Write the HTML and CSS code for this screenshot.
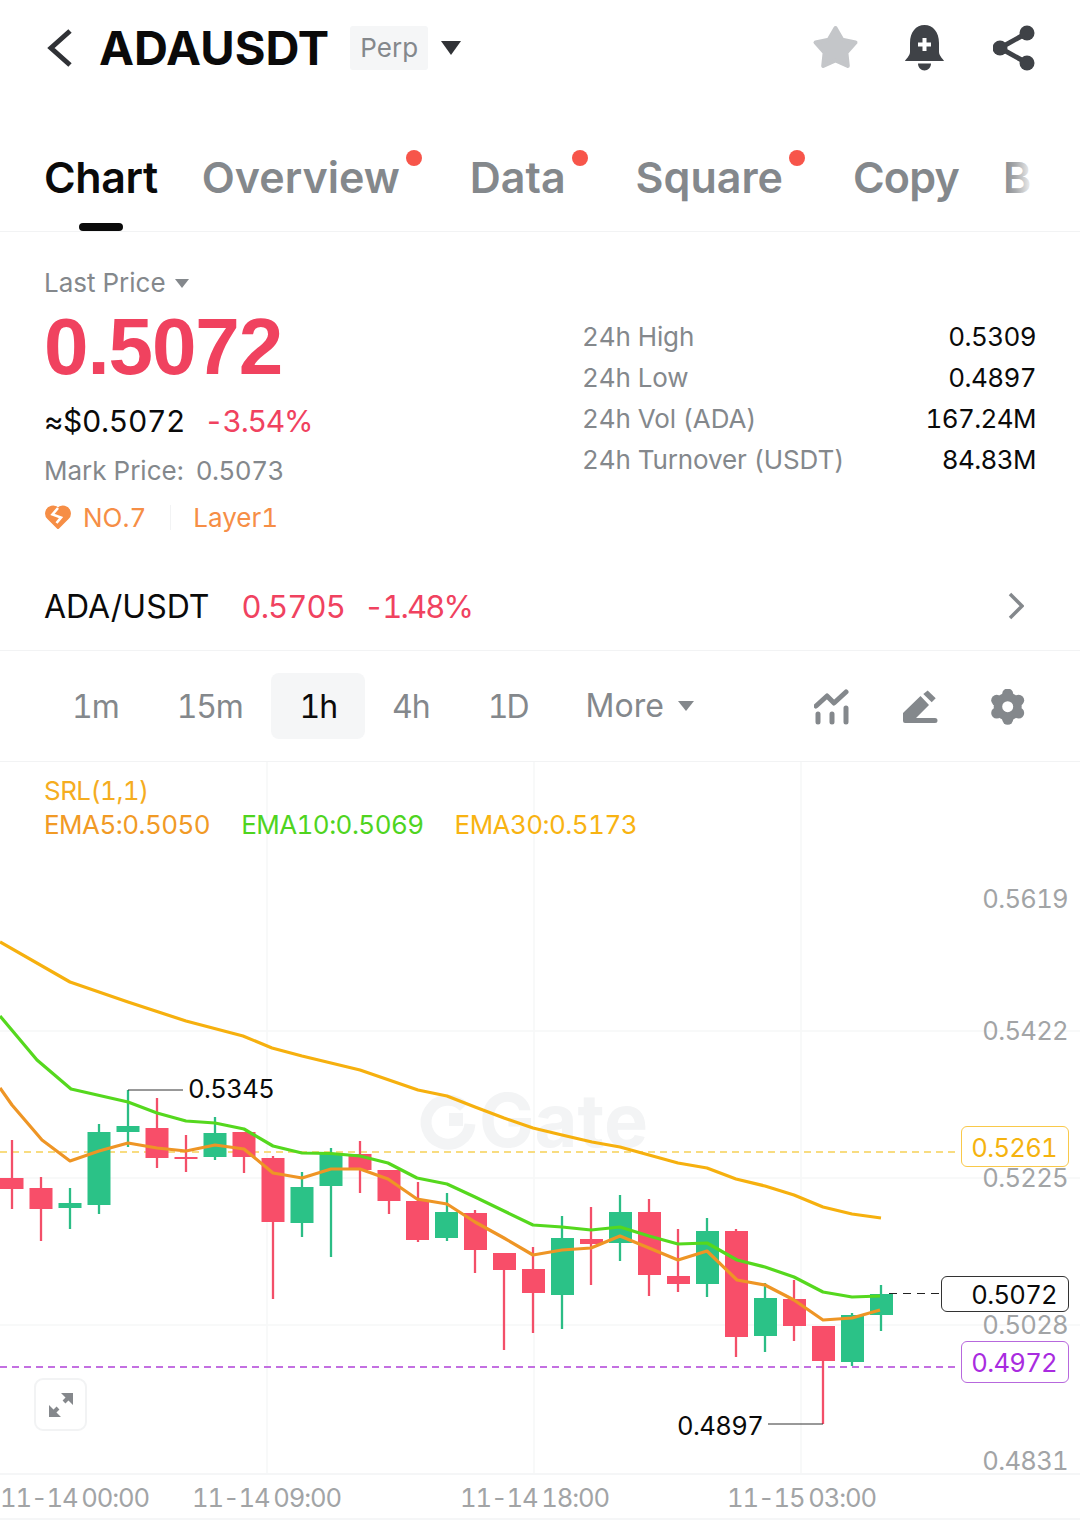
FILE: index.html
```html
<!DOCTYPE html>
<html lang="en">
<head>
<meta charset="utf-8">
<title>ADAUSDT Perp</title>
<link rel="stylesheet" href="styles.css">
</head>
<body>
<div class="page">
  <header class="topbar">
    <svg class="back" width="26" height="38" viewBox="0 0 26 38"><path d="M23 2 L4 19 L23 36" fill="none" stroke="#303236" stroke-width="5"/></svg>
    <h1 class="symbol">ADAUSDT</h1>
    <span class="perp">Perp</span>
    <span class="caret caret-lg"></span>
    <div class="top-icons">
      <svg class="ic-star" width="47" height="46" viewBox="-23.5 -24 47 46"><path d="M0 -21 L6.8 -9.3 L20 -6.5 L10.9 3.6 L12.3 17 L0 11.5 L-12.3 17 L-10.9 3.6 L-20 -6.5 L-6.8 -9.3 Z" fill="#c4c6c9" stroke="#c4c6c9" stroke-width="4" stroke-linejoin="round"/></svg>
      <svg class="ic-bell" width="39" height="46" viewBox="0 0 39 46"><path d="M0 36 C0 35 5 31 5 27 V18 C5 7 11 0 19.5 0 C28 0 34 7 34 18 V27 C34 31 39 35 39 36 Z M13 38.500 H26 C26 42.500 23 45.500 19.500 45.500 C16 45.500 13 42.500 13 38.500 Z" fill="#3f4247"/><path d="M13 19.500 H26 M19.500 13 V26" stroke="#fff" stroke-width="4"/></svg>
      <svg width="42" height="46" viewBox="0 0 42 46"><path d="M34 8 L7 23 L34 38" fill="none" stroke="#3f4247" stroke-width="5"/><circle cx="34" cy="8" r="7.500" fill="#3f4247"/><circle cx="7" cy="23" r="7.500" fill="#3f4247"/><circle cx="34" cy="38" r="7.500" fill="#3f4247"/></svg>
    </div>
  </header>

  <nav class="tabs">
    <span class="tab tab-active">Chart</span>
    <span class="tab tab-dot">Overview</span>
    <span class="tab tab-dot">Data</span>
    <span class="tab tab-dot">Square</span>
    <span class="tab tab-copy">Copy</span>
    <span class="tab">B</span>
    <span class="tab-fade"></span>
  </nav>

  <section class="stats">
    <div class="stats-left">
      <div class="last-label">Last Price <span class="caret caret-sm"></span></div>
      <div class="last-price">0.5072</div>
      <div class="approx"><span>≈$0.5072</span><span class="neg">-3.54%</span></div>
      <div class="mark"><span>Mark Price:</span><span class="mark-val">0.5073</span></div>
      <div class="tags">
        <svg width="26" height="25" viewBox="0 0 26 25"><path d="M13 22.500 L3.500 13 C0 9.500 1.500 3.500 6.500 2.200 C9 1.600 11.500 2.500 13 4.500 C14.500 2.500 17 1.600 19.500 2.200 C24.500 3.500 26 9.500 22.500 13 Z" fill="#f68e46" stroke="#f68e46" stroke-width="3" stroke-linejoin="round"/><path d="M13 3 L7.500 9.500 L16 12.500 L11.500 18" fill="none" stroke="#fff" stroke-width="2.600"/></svg>
        <span class="rank">NO.7</span>
        <span class="tag-sep"></span>
        <span>Layer1</span>
      </div>
    </div>
    <dl class="stats-right">
      <div class="stat"><dt>24h High</dt><dd>0.5309</dd></div>
      <div class="stat"><dt>24h Low</dt><dd>0.4897</dd></div>
      <div class="stat"><dt>24h Vol (ADA)</dt><dd>167.24M</dd></div>
      <div class="stat"><dt>24h Turnover (USDT)</dt><dd>84.83M</dd></div>
    </dl>
  </section>

  <div class="spot">
    <span class="spot-name">ADA/USDT</span>
    <span class="spot-val">0.5705</span>
    <span class="spot-pct">-1.48%</span>
    <svg class="spot-arrow" width="16" height="28" viewBox="0 0 16 28"><path d="M2 2 L14 14 L2 26" fill="none" stroke="#84888c" stroke-width="3.500"/></svg>
  </div>

  <div class="intervals">
    <span class="iv">1m</span>
    <span class="iv iv-15">15m</span>
    <span class="iv iv-active">1h</span>
    <span class="iv">4h</span>
    <span class="iv iv-1d">1D</span>
    <span class="iv iv-more">More <span class="caret caret-md"></span></span>
    <div class="tools">
      <svg width="36" height="36" viewBox="815 689 36 36"><path d="M817 706 L828 696 L835 703 L847 692" fill="none" stroke="#84888c" stroke-width="5" stroke-linecap="round" stroke-linejoin="round"/><path d="M819 714 V722 M833 714 V722 M847 708 V722" stroke="#84888c" stroke-width="5" stroke-linecap="round"/></svg>
      <svg width="36" height="36" viewBox="902 689 36 36"><path d="M903 713 L920.500 696 L929 705 L916 718 H935 A2.500 2.500 0 0 1 935 723 H905 A2 2 0 0 1 903 721 Z" fill="#84888c"/><path d="M923.300 694 L927.700 690.500 L935.700 698.300 L931.700 702.300 Z" fill="#84888c"/></svg>
      <svg width="36" height="36" viewBox="990 689 36 36"><g fill="#84888c"><circle cx="1007.700" cy="694" r="5.500"/><circle cx="1018.700" cy="700.300" r="5.500"/><circle cx="1018.700" cy="713" r="5.500"/><circle cx="1007.700" cy="719.300" r="5.500"/><circle cx="996.700" cy="713" r="5.500"/><circle cx="996.700" cy="700.300" r="5.500"/><circle cx="1007.700" cy="706.700" r="14"/></g><circle cx="1007.700" cy="706.700" r="5.500" fill="#fff"/></svg>
    </div>
  </div>

  <div class="chart">
    <svg class="plot" width="1080" height="711" viewBox="0 762 1080 711">
      <g class="grid">
        <path d="M267 762V1473M534 762V1473M801 762V1473"/>
        <path d="M0 1031H1080M0 1178H1080M0 1325H1080"/>
      </g>
      <path class="wm" d="M464 1107 A22 22 0 1 0 470 1124" fill="none" stroke-width="11"/>
      <rect class="wm-block" x="449" y="1113" width="14" height="13"/>
      <text class="wm-text" x="479" y="1147">Gate</text>
      <path class="dash dash-y" d="M0 1152H955"/>
      <path class="dash dash-p" d="M0 1367H955"/>
      <path class="dash dash-k" d="M889 1293.500H941"/>
      <g class="dn">
        <path d="M12 1140V1209"/><rect x="0" y="1178" width="23.500" height="11"/>
        <path d="M41 1177V1241"/><rect x="29.500" y="1188" width="23" height="21"/>
        <path d="M157 1098V1168"/><rect x="145.500" y="1128" width="23" height="30"/>
        <path d="M186 1135V1172"/><rect x="174.500" y="1157" width="23" height="2"/>
        <path d="M244 1132V1173"/><rect x="232.500" y="1132" width="23" height="25"/>
        <path d="M273 1156V1299"/><rect x="261.500" y="1158" width="23" height="64"/>
        <path d="M360 1141V1193"/><rect x="348.500" y="1154" width="23" height="16"/>
        <path d="M389 1170V1214"/><rect x="377.500" y="1170" width="23" height="31"/>
        <path d="M418 1182V1242"/><rect x="406" y="1201" width="23" height="39"/>
        <path d="M475 1210V1273"/><rect x="464" y="1213" width="23" height="37"/>
        <path d="M504 1253V1350"/><rect x="493" y="1253" width="23" height="17"/>
        <path d="M533 1247V1333"/><rect x="522" y="1269" width="23" height="24"/>
        <path d="M591 1207V1285"/><rect x="580" y="1239" width="23" height="5"/>
        <path d="M649 1199V1296"/><rect x="638" y="1212" width="23" height="63"/>
        <path d="M678 1229V1292"/><rect x="667" y="1276" width="23" height="8"/>
        <path d="M736 1229V1357"/><rect x="725" y="1231" width="23" height="106"/>
        <path d="M794 1280V1341"/><rect x="783" y="1299" width="23" height="27"/>
        <path d="M823 1326V1424"/><rect x="812" y="1326" width="23" height="35"/>
      </g>
      <g class="up">
        <path d="M70 1188V1229"/><rect x="58.500" y="1203" width="23" height="5"/>
        <path d="M99 1124V1214"/><rect x="87.500" y="1132" width="23" height="73"/>
        <path d="M128 1090V1147"/><rect x="116.500" y="1126" width="23" height="6"/>
        <path d="M215 1117V1160"/><rect x="203.500" y="1133" width="23" height="24"/>
        <path d="M302 1172V1237"/><rect x="290.500" y="1187" width="23" height="36"/>
        <path d="M331 1148V1257"/><rect x="319.500" y="1153" width="23" height="33"/>
        <path d="M447 1193V1241"/><rect x="435" y="1212" width="23" height="26"/>
        <path d="M562 1216V1329"/><rect x="551" y="1238" width="23" height="57"/>
        <path d="M620 1195V1261"/><rect x="609" y="1212" width="23" height="31"/>
        <path d="M707 1218V1297"/><rect x="696" y="1231" width="23" height="53"/>
        <path d="M765 1283V1352"/><rect x="754" y="1298" width="23" height="38"/>
        <path d="M852 1313V1366"/><rect x="841" y="1315" width="23" height="47"/>
        <path d="M881 1285V1331"/><rect x="870" y="1294" width="23" height="21"/>
      </g>
      <polyline class="ema ema30" points="0,942 70,982 128,1002 186,1021 243,1036 272,1048 302,1056 360,1070 389,1080 418,1090 447,1096 475,1107 504,1118 533,1128 562,1135 592,1142 620,1147 649,1155 678,1163 707,1168 736,1179 765,1186 794,1195 823,1207 852,1214 881,1218"/>
      <polyline class="ema ema10" points="0,1016 37,1060 71,1089 128,1102 157,1113 186,1121 215,1123 244,1129 273,1146 302,1153 331,1153.500 360,1156 388,1163 417,1178 447,1184 475,1197 504,1211 533,1225 562,1227 591,1230 620,1227 649,1236 678,1244 707,1243 737,1260 765,1267 794,1277 823,1292 852,1297 880,1296"/>
      <polyline class="ema ema5" points="0,1088 12,1105 42,1140 70,1161 99,1151 128,1143 157,1148 186,1151 215,1145 244,1149 273,1173 302,1178 331,1169 360,1169 388,1179 417,1199 447,1204 475,1222 504,1238 533,1255 562,1250 591,1248 620,1236 649,1248 678,1260 707,1251 737,1280 765,1285 794,1300 823,1320 852,1318 880,1310"/>
      <path class="lead" d="M128 1090H183M768 1424H823"/>
    </svg>

    <div class="legend">
      <div class="legend-srl">SRL(1,1)</div>
      <div class="legend-row">
        <span class="l-ema5">EMA5:0.5050</span>
        <span class="l-ema10">EMA10:0.5069</span>
        <span class="l-ema30">EMA30:0.5173</span>
      </div>
    </div>

    <span class="axis a1">0.5619</span>
    <span class="axis a2">0.5422</span>
    <span class="axis a3">0.5225</span>
    <span class="axis a4">0.5028</span>
    <span class="axis a5">0.4831</span>

    <span class="ptag ptag-y">0.5261</span>
    <span class="ptag ptag-k">0.5072</span>
    <span class="ptag ptag-p">0.4972</span>

    <span class="extreme ex-hi">0.5345</span>
    <span class="extreme ex-lo">0.4897</span>

    <button class="expand" type="button" aria-label="Expand">
      <svg width="26" height="26" viewBox="0 0 26 26"><path d="M25 1 V13 L13 1 Z M1 25 V13 L13 25 Z" fill="#85888c"/><path d="M6 20 L10 16 M16 10 L20 6" stroke="#85888c" stroke-width="4"/></svg>
    </button>
  </div>

  <div class="timeaxis">
    <span class="t t1">11-14 00:00</span>
    <span class="t t2">11-14 09:00</span>
    <span class="t t3">11-14 18:00</span>
    <span class="t t4">11-15 03:00</span>
  </div>
</div>
</body>
</html>
```

FILE: styles.css
```css
* { box-sizing: border-box; }
html, body { margin: 0; padding: 0; background: #fff; }
body { font-family: Inter, "Liberation Sans", sans-serif; color: #0a0a0a; font-variant-numeric: tabular-nums; }
.page { width: 1080px; height: 1530px; overflow: hidden; }

.caret { display: inline-block; width: 0; height: 0; border-style: solid; border-color: transparent; border-bottom-width: 0; }
.caret-lg { border-width: 14px 10px 0; border-top-color: #303236; }
.caret-md { border-width: 10px 8px 0; border-top-color: #84888c; }
.caret-sm { border-width: 9px 7px 0; border-top-color: #84888c; }

.topbar { height: 95px; display: flex; align-items: center; padding-left: 47px; }
.back { flex: none; }
.symbol { margin: 0 0 0 26px; font-size: 47px; font-weight: 700; letter-spacing: 0; line-height: 1; }
.perp { margin-left: 21px; width: 78px; height: 44px; display: flex; align-items: center; justify-content: center; background: #f5f6f7; color: #84888c; font-size: 26px; border-radius: 3px; }
.caret-lg { margin-left: 13px; }
.top-icons { margin-left: auto; margin-right: 45px; display: flex; align-items: center; gap: 49px; }
.top-icons svg { display: block; }
.top-icons .ic-star { margin-right: -3px; }

.tabs { position: relative; height: 137px; border-bottom: 1px solid #f2f3f4; display: flex; padding: 55px 0 0 44px; overflow: hidden; }
.tab { position: relative; font-size: 43px; line-height: 54px; font-weight: 600; color: #84888c; margin-right: 44px; white-space: nowrap; height: 81px; }
.tab-active { color: #0a0a0a; letter-spacing: -.4px; }
.tab-active::after { content: ""; position: absolute; left: 35px; bottom: 0; width: 44px; height: 8px; border-radius: 4px; background: #0a0a0a; }
.tab-dot { padding-right: 26px; }
.tab-dot::after { content: ""; position: absolute; right: 4px; top: 0; width: 16px; height: 16px; border-radius: 50%; background: #f7554a; }
.tab-copy { letter-spacing: -.8px; }
.tab-fade { position: absolute; right: 0; top: 0; bottom: 0; width: 82px; background: linear-gradient(90deg, rgba(255,255,255,0) 6px, rgba(255,255,255,.3) 18px, #fff 36px); }

.stats { height: 329px; display: flex; justify-content: space-between; padding: 0 44px 0 44px; }
.stats-left { padding-top: 32px; }
.last-label { height: 38px; line-height: 38px; font-size: 26px; color: #84888c; display: flex; align-items: center; gap: 9px; }
.last-price { height: 90px; line-height: 90px; font-family: "Liberation Sans", Arial, sans-serif; font-size: 80px; font-weight: 700; color: #f0425f; letter-spacing: -1.100px; }
.approx { height: 58px; line-height: 58px; font-size: 30px; display: flex; gap: 19px; color: #0a0a0a; letter-spacing: -.35px; }
.neg { color: #f0425f; letter-spacing: -1.200px; }
.mark { height: 42px; line-height: 42px; font-size: 26px; color: #84888c; display: flex; gap: 12px; }
.mark-val { letter-spacing: -.5px; }
.tags { margin-top: 4px; height: 42px; display: flex; align-items: center; font-size: 26px; color: #f68e46; padding-left: 1px; }
.rank { margin-left: 12px; }
.tag-sep { width: 1px; height: 25px; background: #f2f3f4; margin: 0 22px 0 24px; }

.stats-right { margin: 0; padding-top: 84px; width: 454px; }
.stat { display: flex; justify-content: space-between; height: 41px; line-height: 41px; font-size: 26px; }
.stat dt { color: #84888c; letter-spacing: -.1px; }
.stat dd { margin: 0; color: #0a0a0a; letter-spacing: -.6px; }

.spot { height: 90px; border-bottom: 1px solid #f2f3f4; display: flex; align-items: center; padding: 2px 56px 0 44px; font-size: 32px; }
.spot-name { margin-right: 32px; }
.spot-val { color: #f0425f; font-size: 31px; letter-spacing: -.9px; margin-right: 19px; }
.spot-pct { color: #f0425f; font-size: 31px; letter-spacing: -1.800px; }
.spot-arrow { margin-left: auto; margin-top: -2px; }

.intervals { height: 111px; border-bottom: 1px solid #f2f3f4; display: flex; align-items: center; padding-left: 43px; }
.iv { padding: 0 29px; height: 66px; line-height: 68px; font-size: 32px; letter-spacing: -1px; color: #84888c; border-radius: 8px; white-space: nowrap; }
.iv-15 { letter-spacing: -1.300px; }
.iv-1d { letter-spacing: -2px; }
.iv-active { background: #f5f6f7; color: #0a0a0a; padding: 0 28px; margin-right: -2px; }
.iv-more { display: flex; align-items: center; gap: 14px; letter-spacing: 0; }
.tools { margin-left: auto; margin-right: 54px; display: flex; gap: 52px; padding-top: 2px; }
.tools svg { display: block; }

.chart { position: relative; height: 711px; }
.plot { position: absolute; left: 0; top: 0; display: block; }
.grid path { stroke: #f6f7f8; stroke-width: 1.500; fill: none; }
.wm { stroke: #f3f4f5; }
.wm-block { fill: #f3f4f5; }
.wm-text { font-family: Inter, sans-serif; font-size: 74px; font-weight: 700; fill: #f3f4f5; }
.dash { stroke-width: 1.200; fill: none; stroke-dasharray: 7 5; }
.dash-y { stroke: #f8dc80; stroke-width: 2; }
.dash-p { stroke: #b040d8; stroke-width: 1.400; }
.dash-k { stroke: #222; stroke-width: 1; stroke-dasharray: 8 6; }
.dn path { stroke: #f34f69; stroke-width: 2.300; fill: none; }
.dn rect { fill: #f84e69; }
.up path { stroke: #2bbd85; stroke-width: 2.300; fill: none; }
.up rect { fill: #2bc287; }
.ema { fill: none; stroke-width: 3.200; stroke-linejoin: round; }
.ema30 { stroke: #f6b00e; }
.ema10 { stroke: #55d81e; }
.ema5 { stroke: #ee9525; }
.lead { stroke: #333; stroke-width: 1; fill: none; }

.legend { position: absolute; left: 44px; top: 12px; font-size: 26px; line-height: 34px; letter-spacing: -.55px; }
.legend-srl { color: #f5ad1f; }
.legend-row { display: flex; gap: 31px; }
.l-ema5 { color: #f19a25; }
.l-ema10 { color: #4fd41f; }
.l-ema30 { color: #f8b312; }

.axis { position: absolute; right: 12px; font-size: 25.600px; line-height: 30px; letter-spacing: -.7px; color: #a2a4a6; }
.a1 { top: 122px; }
.a2 { top: 254px; }
.a3 { top: 401px; }
.a4 { top: 548px; }
.a5 { top: 684px; }

.ptag { position: absolute; right: 11px; background: #fff; border: 1px solid; border-radius: 6px; font-size: 25.600px; letter-spacing: -.7px; text-align: right; padding-right: 11px; }
.ptag-y { top: 364px; width: 108px; height: 41px; line-height: 41px; color: #f5b30f; border-color: #f9c94a; }
.ptag-k { top: 514px; width: 128px; height: 36px; line-height: 35px; color: #0a0a0a; border-color: #333; }
.ptag-p { top: 579px; width: 108px; height: 42px; line-height: 41px; color: #a92be0; border-color: #b768dd; }

.extreme { position: absolute; font-size: 25.600px; letter-spacing: -.6px; line-height: 32px; color: #0a0a0a; }
.ex-hi { left: 188px; top: 311px; }
.ex-lo { left: 677px; top: 648px; }

.expand { position: absolute; left: 34px; top: 616px; width: 53px; height: 53px; padding: 0; background: #fff; border: 2px solid #f2f3f4; border-radius: 9px; display: flex; align-items: center; justify-content: center; }
.expand svg { display: block; }

.timeaxis { position: relative; height: 47px; border-top: 2px solid #f5f6f7; border-bottom: 2px solid #f5f6f7; font-size: 25.600px; letter-spacing: -1.100px; word-spacing: -2px; color: #a2a4a6; }
.t { position: absolute; top: 6px; line-height: 34px; white-space: nowrap; }
.t1 { left: 0; }
.t2 { left: 192px; }
.t3 { left: 460px; }
.t4 { left: 727px; }
```
